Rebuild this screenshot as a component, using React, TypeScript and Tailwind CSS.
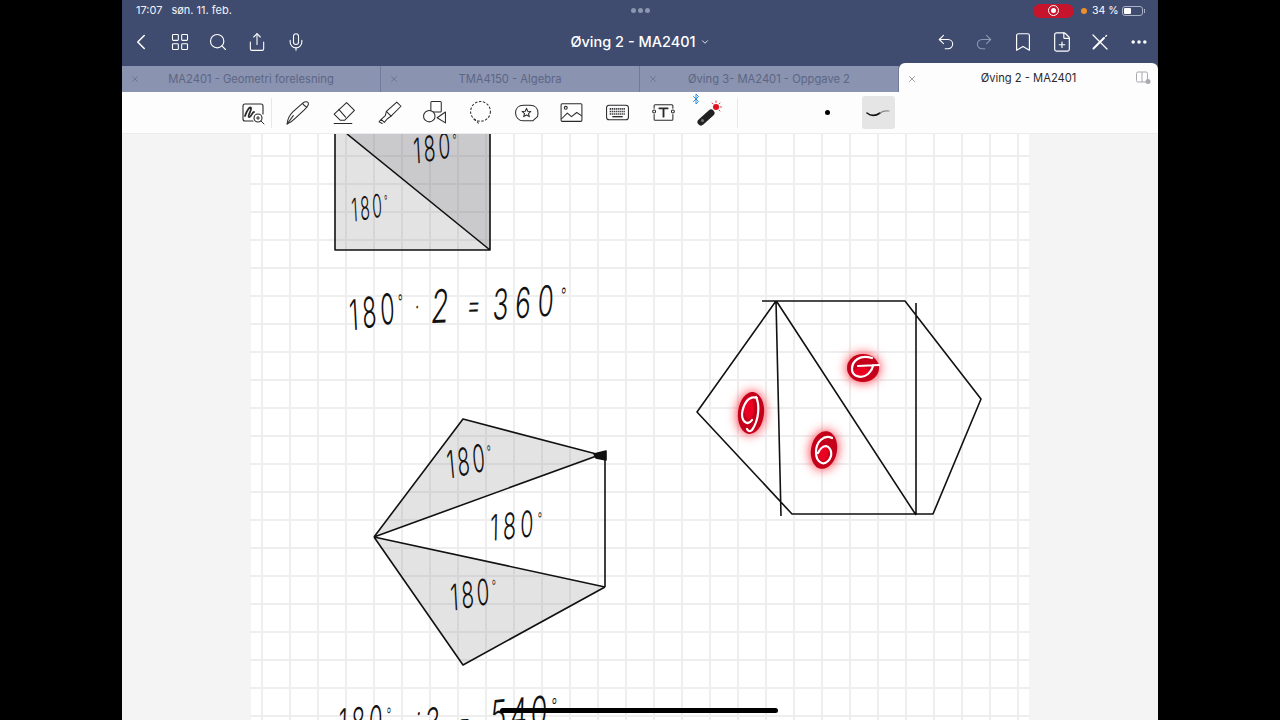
import { Bluetooth, Bookmark, ChevronDown, ChevronLeft, Ellipsis, FilePlus, LayoutGrid, Mic, Redo2, Search, Share, Undo2, X } from 'lucide-react';
import type { ReactNode } from 'react';

const font = 'font-["Inter","Liberation_Sans",sans-serif]';

const tabs = [
  { label: 'MA2401 - Geometri forelesning' },
  { label: 'TMA4150 - Algebra' },
  { label: 'Øving 3- MA2401 - Oppgave 2' },
];

function NavButton({ children }: { children: ReactNode }) {
  return <div className="flex h-[38px] w-[38.6px] items-center justify-center">{children}</div>;
}

function Tool({ children }: { children: ReactNode }) {
  return <div className="flex h-[42px] w-[45.7px] items-center justify-center text-[#2a2a2c]">{children}</div>;
}

function Glyph({ children }: { children: ReactNode }) {
  return (
    <svg width="25" height="25" viewBox="0 0 24 24" fill="none" stroke="currentColor" strokeWidth="1" strokeLinecap="round" strokeLinejoin="round">
      {children}
    </svg>
  );
}

// Handwritten ink from the note, kept as real text
function Ink({ x, y, size = 36, rotate = -10, narrow = 0.56, spacing = 5, children }: { x: number; y: number; size?: number; rotate?: number; narrow?: number; spacing?: number; children: string }) {
  const hasDegree = children.endsWith('°');
  return (
    <text
      transform={`translate(${x} ${y}) rotate(${rotate}) skewX(-7) scale(${narrow} 1)`}
      fontFamily="Inter, sans-serif"
      fontWeight={300}
      fontSize={size}
      fill="#111"
      letterSpacing={spacing}
    >
      {hasDegree ? children.slice(0, -1) : children}
      {hasDegree && <tspan fontSize={size * 0.45} dy={-size * 0.32}>°</tspan>}
    </text>
  );
}

function Drawing() {
  return (
    <svg className="absolute inset-0" width="778" height="586" viewBox="251 134 778 586" fill="none" stroke="#111" strokeWidth="1.6" strokeLinejoin="round">
      {/* square */}
      <polygon points="335,134 347,134 490,250 335,250" fill="#8b8b90" fillOpacity="0.24" stroke="none" />
      <polygon points="347,134 490,134 490,250" fill="#707074" fillOpacity="0.37" stroke="none" />
      <path d="M335 134V250H490V134M347 134L490 250" />

      {/* pentagon */}
      <polygon points="463,419 600,456 374,537" fill="#8b8b90" fillOpacity="0.24" stroke="none" />
      <polygon points="374,537 606,587 463,665" fill="#8b8b90" fillOpacity="0.24" stroke="none" />
      <path d="M374 537L463 419L604 456M374 537L602 454M374 537L605 587M374 537L463 665L605 587M605 452V587" />
      <path d="M594 454L606 451L606 460L596 458Z" fill="#111" />

      {/* hexagon */}
      <path d="M762 301H905L981 399L933 514H792L697 412L776 301L781 516M777 302L916 515M916 303V515" />

      <g stroke="none">
        <Ink x={414} y={164} size={35}>180°</Ink>
        <Ink x={352} y={222} size={32} narrow={0.5}>180°</Ink>
        <Ink x={350} y={331} size={42} narrow={0.56} spacing={7}>180°</Ink>
        <Ink x={414} y={316} size={26} rotate={0}>·</Ink>
        <Ink x={430} y={323} size={46} rotate={-2} narrow={0.62}>2</Ink>
        <Ink x={466} y={317} size={34} rotate={-2} narrow={0.62}>=</Ink>
        <Ink x={492} y={320} size={42} rotate={-4} narrow={0.62} spacing={11}>360°</Ink>
        <Ink x={448} y={479} size={38} rotate={-12} narrow={0.54}>180°</Ink>
        <Ink x={490} y={541} size={36} rotate={-6} narrow={0.6} spacing={7}>180°</Ink>
        <Ink x={451} y={611} size={36} rotate={-10} narrow={0.58}>180°</Ink>
        <Ink x={338} y={738} size={40} rotate={-5} narrow={0.56} spacing={7}>180°</Ink>
        <Ink x={415} y={724} size={30} rotate={0} narrow={0.6}>·</Ink>
        <Ink x={424} y={737} size={40} rotate={-3} narrow={0.6}>3</Ink>
        <Ink x={458} y={732} size={30} rotate={-3} narrow={0.6}>=</Ink>
        <Ink x={490} y={731} size={42} rotate={-5} narrow={0.64} spacing={6}>540°</Ink>
      </g>

      {/* laser marks */}
      <g className="drop-shadow-[0_0_6px_#ff2030]" stroke="none">
        <ellipse cx="863" cy="368" rx="16" ry="14" fill="#c4001a" />
        <ellipse cx="751" cy="413" rx="13" ry="21" fill="#c4001a" transform="rotate(6 751 413)" />
        <ellipse cx="824" cy="450" rx="13" ry="19" fill="#c4001a" transform="rotate(10 824 450)" />
      </g>
      <g stroke="none" fill="#ea0020">
        <ellipse cx="862" cy="372" rx="8" ry="5" />
        <ellipse cx="749" cy="408" rx="5" ry="11" />
        <ellipse cx="823" cy="453" rx="5" ry="8" />
      </g>
      <g stroke="#fff" strokeWidth="2.2" strokeLinecap="round" fill="none">
        <path d="M872 358C860 354 852 361 852 369C852 377 862 379 868 374C871 371 873 368 873 365M879 365L858 366" />
        <path d="M757 398C748 395 743 405 742 414C742 422 748 426 752 420M756 397C760 405 759 420 752 430C750 432 748 431 747 429" />
        <path d="M832 438C824 434 816 442 816 452C816 462 823 466 828 461C833 456 832 448 826 446C822 446 820 449 818 453" />
      </g>
    </svg>
  );
}

export default function App() {
  return (
    <div className={`relative flex h-[720px] w-[1280px] justify-center overflow-hidden bg-black ${font}`}>
      <div className="flex w-[1036px] flex-col bg-[#f4f4f5]">
        {/* status + nav */}
        <div className="bg-[#3f4c6f] text-white">
          <div className="relative flex h-[21px] items-center justify-between pl-[14px] pr-[13px] text-[11px]">
            <div className="flex gap-[9px] text-[#f2f3f7]">
              <span>17:07</span>
              <span>søn. 11. feb.</span>
            </div>
            <div className="absolute left-[509px] top-[8px] flex gap-[2px]">
              <span className="h-[5px] w-[5px] rounded-full bg-[#8d96b0]" />
              <span className="h-[5px] w-[5px] rounded-full bg-[#8d96b0]" />
              <span className="h-[5px] w-[5px] rounded-full bg-[#8d96b0]" />
            </div>
            <div className="flex items-center">
              <div className="flex h-[14px] w-[41px] items-center justify-center rounded-full bg-[#c5142c]">
                <span className="flex h-[11px] w-[11px] items-center justify-center rounded-full border border-white">
                  <span className="h-[5px] w-[5px] rounded-full bg-white" />
                </span>
              </div>
              <span className="ml-[7px] h-[6px] w-[6px] rounded-full bg-[#ee8f2a]" />
              <span className="ml-[5px] w-[24px] whitespace-nowrap text-[10.5px]">34 %</span>
              <div className="ml-[6px] flex h-[10px] w-[21px] items-center rounded-[3px] border border-[#aab1c6] p-[1px]">
                <span className="h-full w-[7px] rounded-[1px] bg-white" />
              </div>
              <span className="ml-[1px] h-[4px] w-[1px] bg-[#aab1c6]" />
            </div>
          </div>

          <div className="grid h-[42px] grid-cols-[1fr_auto_1fr] items-center">
            <div className="flex">
              <NavButton><ChevronLeft size={26} strokeWidth={1.4} /></NavButton>
              <NavButton><LayoutGrid size={20} strokeWidth={1.3} /></NavButton>
              <NavButton><Search size={20} strokeWidth={1.4} /></NavButton>
              <NavButton><Share size={20} strokeWidth={1.3} /></NavButton>
              <NavButton><Mic size={20} strokeWidth={1.3} /></NavButton>
            </div>
            <div className="flex items-center gap-[4px] text-[14.5px] font-medium">
              <span>Øving 2 - MA2401</span>
              <ChevronDown size={10} strokeWidth={2} />
            </div>
            <div className="flex justify-end">
              <NavButton><Undo2 size={20} strokeWidth={1.3} /></NavButton>
              <NavButton><Redo2 size={20} strokeWidth={1.3} className="text-[#8d96b0]" /></NavButton>
              <NavButton><Bookmark size={22} strokeWidth={1.3} /></NavButton>
              <NavButton><FilePlus size={22} strokeWidth={1.3} /></NavButton>
              <NavButton>
                <svg width="18" height="18" viewBox="0 0 18 18" fill="none" stroke="currentColor" strokeLinecap="round">
                  <path d="M2 2L16 16" strokeWidth="1.3" />
                  <path d="M13 5L2.5 15.5" strokeWidth="2" />
                  <path d="M15.5 2.5L14.8 3.2" strokeWidth="1.4" />
                </svg>
              </NavButton>
              <NavButton><Ellipsis size={20} strokeWidth={2.2} /></NavButton>
            </div>
          </div>

          {/* tabs */}
          <div className="flex h-[29px] items-end text-[11.2px]">
            {tabs.map((t) => (
              <div key={t.label} className="relative flex h-[26px] w-[259px] items-center justify-center border-r border-[#717a98] bg-[#8a93b0] text-[#5d6684]">
                <X size={10} strokeWidth={1.5} className="absolute left-[8px]" />
                <span>{t.label}</span>
              </div>
            ))}
            <div className="relative flex h-[29px] w-[259px] items-center justify-center rounded-t-md bg-[#fdfdfd] pt-[2px] text-[#2a2a2c]">
              <X size={10} strokeWidth={1.5} className="absolute left-[8px] text-[#6a6a70]" />
              <span>Øving 2 - MA2401</span>
              <svg className="absolute right-[7px] top-[8px]" width="15" height="14" viewBox="0 0 15 14" fill="none" stroke="#a9a9ae" strokeWidth="1">
                <rect x="0.5" y="1" width="11" height="10" rx="1.5" />
                <path d="M6 1V11" />
                <circle cx="12" cy="10.5" r="2.5" fill="#a9a9ae" stroke="none" />
              </svg>
            </div>
          </div>
        </div>

        {/* toolbar */}
        <div className="flex h-[42px] items-center border-b border-[#ececee] bg-[#fdfdfd] pl-[119px]">
          <div className="flex w-[24px] justify-center text-[#2a2a2c]">
            <svg width="24" height="24" viewBox="0 0 24 24" fill="none" stroke="currentColor" strokeLinecap="round">
              <path d="M12 20H4a2 2 0 0 1-2-2V5a2 2 0 0 1 2-2h16a2 2 0 0 1 2 2v8" strokeWidth="1.1" />
              <path d="M4 15C6 9 9 5 10 7C11 9 6 15 8 16C10 17 11 11 13 11" strokeWidth="1.8" />
              <circle cx="17" cy="17" r="4" fill="#fdfdfd" strokeWidth="1.1" />
              <path d="M20 20L23 23M15.5 17h3M17 15.5v3" strokeWidth="1" />
            </svg>
          </div>
          <div className="ml-[6px] mr-[3px] h-[30px] w-px bg-[#e8e8ea]" />
          <Tool>
            <Glyph>
              <path d="M2 23C2.5 18 4.5 14.5 7.5 11.5L17 3C19.5 1 22.5 1.5 22.5 3.5C22.5 5.5 20.5 7.5 18.5 9.5L10 17.5C7.5 20 5 22 2 23Z" />
              <path d="M17 3.5C18 5 19.5 6.5 21 7M2 23L8 15" />
            </Glyph>
          </Tool>
          <Tool>
            <Glyph>
              <path d="M15 2.5L22.5 10L13 19.5H9L3 13.5Z" />
              <path d="M7.5 9L14 16.5M3 22.5H20" />
            </Glyph>
          </Tool>
          <Tool>
            <Glyph>
              <path d="M19 2L23 6L13.5 15.5L9 11Z" />
              <path d="M9 11L8 15L4 18.5L7 21.5L10 18L13.5 15.5M4 18.5L2 21L5 22.5" />
            </Glyph>
          </Tool>
          <Tool>
            <Glyph>
              <rect x="8.5" y="1.5" width="10" height="10" rx="1" />
              <circle cx="7" cy="15.5" r="5.5" fill="#fdfdfd" />
              <path d="M22.5 11.5V22L14.5 17Z" fill="#fdfdfd" />
            </Glyph>
          </Tool>
          <Tool>
            <svg width="25" height="25" viewBox="0 0 24 24" fill="none" stroke="currentColor" strokeWidth="1" strokeDasharray="2.4 1.5">
              <circle cx="12" cy="11" r="9.5" />
              <path d="M5.5 18.5C8 20 9.5 21 10.5 23.5" />
            </svg>
          </Tool>
          <Tool>
            <Glyph>
              <path d="M16 20H9C4.5 20 1.5 16.5 1.5 12.5C1.5 8 4.5 5 9 5H15.5C20 5 23 8 23 12.5C23 14 22.8 15 22.5 16L18 20Z" />
              <path d="M12 8L13.2 10.8L16.2 11L13.9 13L14.7 16L12 14.4L9.3 16L10.1 13L7.8 11L10.8 10.8Z" />
            </Glyph>
          </Tool>
          <Tool>
            <Glyph>
              <rect x="2" y="3.5" width="20" height="17" rx="1" />
              <circle cx="6.5" cy="7.5" r="1.4" />
              <path d="M2.5 18L8 12.5L12 16L17 12L21.5 15" />
            </Glyph>
          </Tool>
          <Tool>
            <svg width="25" height="25" viewBox="0 0 24 24" fill="none" stroke="#2a2a2c">
              <rect x="1.5" y="5" width="21" height="14" rx="2.5" strokeWidth="1" />
              <path d="M4.5 8.5h15M4.5 11h15M4.5 13.5h15" strokeDasharray="1.2 0.7" strokeWidth="1.5" />
              <path d="M7 16h10" strokeWidth="1.3" />
            </svg>
          </Tool>
          <Tool>
            <Glyph>
              <path d="M3 8V5.5C3 5 3.5 4.5 4 4.5H20C20.5 4.5 21 5 21 5.5V8M3 14V18.5C3 19 3.5 19.5 4 19.5H20C20.5 19.5 21 19 21 18.5V14" />
              <circle cx="3" cy="11" r="1.4" />
              <circle cx="21" cy="11" r="1.4" />
              <path d="M8 8H16M12 8V16" strokeWidth="1.8" />
            </Glyph>
          </Tool>
          <Tool>
            <div className="relative">
              <Bluetooth size={12} strokeWidth={2} className="absolute -left-[6px] -top-[7px] text-[#2b8fe0]" />
              <svg width="26" height="26" viewBox="0 0 26 26" fill="none" strokeLinecap="round">
                <path d="M5 22L15 13" stroke="#222" strokeWidth="7" />
                <circle cx="6.5" cy="20.5" r="1.5" fill="#777" />
                <circle cx="20" cy="7" r="3" fill="#e0101f" />
                <path d="M20 1V2.5M25.5 7H24M24 3L23 4M24 11L23 10M16 3L17 4" stroke="#e0404a" strokeWidth="1" />
              </svg>
            </div>
          </Tool>
          <div className="ml-[5px] h-[30px] w-px bg-[#e8e8ea]" />
          <span className="ml-[87px] h-[5px] w-[5px] rounded-full bg-black" />
          <div className="ml-[32px] flex h-[33px] w-[33px] items-center justify-center rounded-[3px] bg-[#e5e5e6]">
            <svg width="24" height="10" viewBox="0 0 24 10" fill="none" strokeLinecap="round">
              <path d="M1 5C6 9 11 7 14 5" stroke="#111" strokeWidth="1.6" />
              <path d="M14 5C16 3.5 20 2.5 23 3" stroke="#888" strokeWidth="1.2" />
            </svg>
          </div>
        </div>

        {/* note canvas */}
        <div className="flex flex-1 justify-center">
          <div className="relative ml-[-1px] h-full w-[778px] overflow-hidden bg-white bg-[linear-gradient(#eeeeef_2px,transparent_2px),linear-gradient(90deg,#eeeeef_2px,transparent_2px)] bg-size-[28px_28px] bg-position-[10px_21px]">
            <Drawing />
          </div>
        </div>
      </div>

      {/* home indicator */}
      <div className="absolute left-[500px] top-[708px] h-[5px] w-[278px] rounded-full bg-black" />
    </div>
  );
}
